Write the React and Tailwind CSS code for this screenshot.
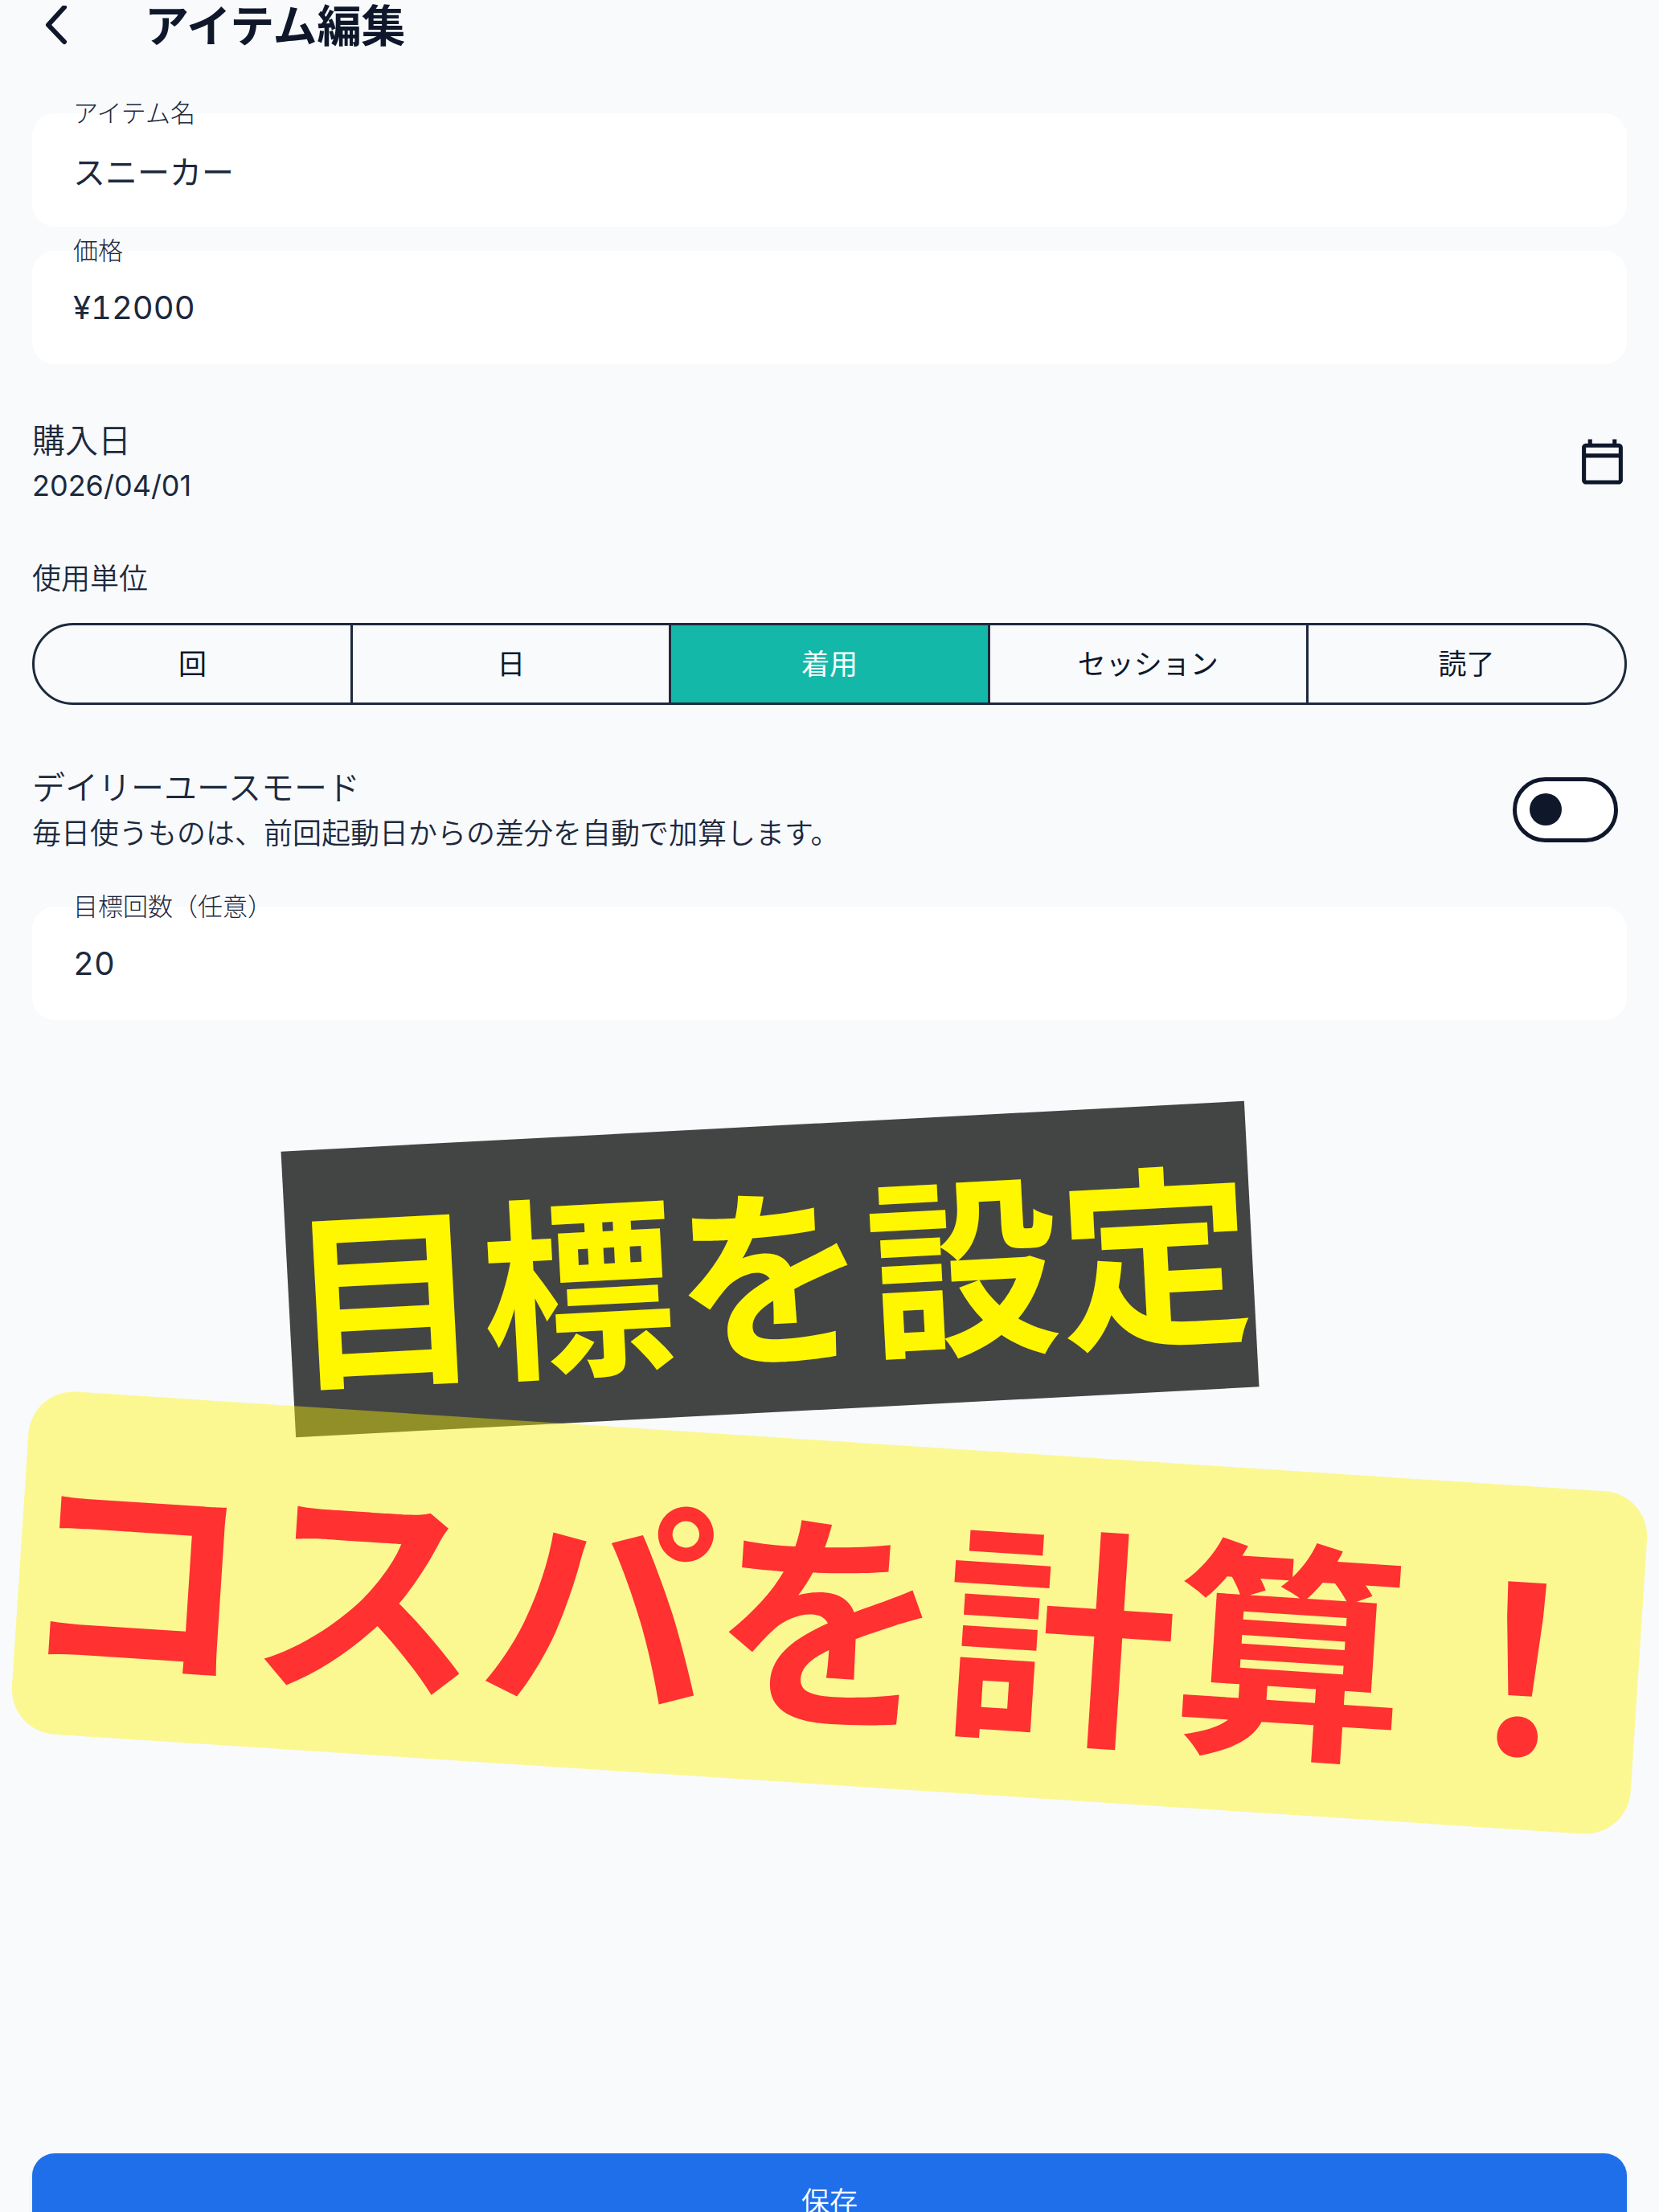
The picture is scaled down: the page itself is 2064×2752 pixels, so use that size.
import { useState } from "react";

const UNITS = ["回", "日", "着用", "セッション", "読了"];

function Field({ id, label, value, onChange, className = "" }) {
  return (
    <div className={`relative ${className}`}>
      <input
        id={id}
        className="h-[141px] w-full rounded-[28px] bg-white px-[51px] text-[40px] tabular-nums text-slate-800 focus:outline-none"
        value={value}
        onChange={(e) => onChange(e.target.value)}
      />
      <label
        htmlFor={id}
        className="absolute left-[51px] top-0 -translate-y-1/2 text-[31px] font-light leading-10 text-slate-800"
      >
        {label}
      </label>
    </div>
  );
}

function BackIcon() {
  return (
    <svg viewBox="0 0 30 50" className="h-[50px] w-[30px]" fill="none" stroke="currentColor" strokeWidth="6" strokeLinecap="round" strokeLinejoin="round">
      <path d="M26 2 6 24l20 21" />
    </svg>
  );
}

function CalendarIcon() {
  return (
    <svg viewBox="0 0 24 24" className="h-[61px] w-[61px]" fill="currentColor">
      <path d="M20 3h-1V1h-2v2H7V1H5v2H4c-1.1 0-2 .9-2 2v16c0 1.1.9 2 2 2h16c1.1 0 2-.9 2-2V5c0-1.1-.9-2-2-2zm0 2v3H4V5h16zM4 21V10h16v11H4z" />
    </svg>
  );
}

export default function App() {
  const [name, setName] = useState("スニーカー");
  const [price, setPrice] = useState("¥12000");
  const [target, setTarget] = useState("20");
  const [unit, setUnit] = useState("着用");
  const [daily, setDaily] = useState(false);

  return (
    <div
      lang="ja"
      className="flex h-screen flex-col overflow-hidden bg-slate-50 px-10 font-['Inter','Noto_Sans_CJK_JP',sans-serif] text-slate-900"
    >
      <header className="flex h-16 shrink-0 items-center gap-24 pl-[14px]">
        <button type="button" aria-label="戻る">
          <BackIcon />
        </button>
        <h1 className="text-[55px] font-bold leading-[60px]">アイテム編集</h1>
      </header>

      <main className="flex flex-col">
        <Field id="item-name" label="アイテム名" value={name} onChange={setName} className="mt-[77px]" />
        <Field id="item-price" label="価格" value={price} onChange={setPrice} className="mt-[30px]" />

        <div className="mt-[65px] flex items-center justify-between">
          <div>
            <p className="text-[41px] font-[350] leading-[60px] text-slate-800">購入日</p>
            <p className="text-[36px] leading-[52px] text-slate-800">2026/04/01</p>
          </div>
          <button type="button" aria-label="購入日を選択">
            <CalendarIcon />
          </button>
        </div>

        <fieldset className="mt-[63px]">
          <legend className="text-[36px] font-[350] leading-[54px] text-slate-800">使用単位</legend>
          <div className="mt-[28px] flex h-[102px] divide-x-[3px] divide-slate-800 overflow-hidden rounded-full border-[3px] border-slate-800">
            {UNITS.map((item) => (
              <label
                key={item}
                className="flex flex-1 cursor-pointer items-center justify-center text-[35px] has-checked:bg-[#14b8a8] has-checked:text-white"
              >
                <input
                  type="radio"
                  name="unit"
                  className="sr-only"
                  checked={unit === item}
                  onChange={() => setUnit(item)}
                />
                {item}
              </label>
            ))}
          </div>
        </fieldset>

        <div className="mt-[73px] flex items-center justify-between pr-[11px]">
          <label htmlFor="daily-mode" className="font-[350] text-slate-800">
            <span className="block text-[41px] leading-[60px]">デイリーユースモード</span>
            <span className="block text-[36px] leading-[54px]">
              毎日使うものは、前回起動日からの差分を自動で加算します。
            </span>
          </label>
          <input
            id="daily-mode"
            type="checkbox"
            role="switch"
            checked={daily}
            onChange={(e) => setDaily(e.target.checked)}
            className="flex h-[81px] w-[131px] shrink-0 cursor-pointer appearance-none items-center rounded-full border-[5px] border-slate-900 bg-white px-4 before:h-10 before:w-10 before:rounded-full before:bg-slate-900 before:content-[''] checked:justify-end"
          />
        </div>

        <Field id="item-target" label="目標回数（任意）" value={target} onChange={setTarget} className="mt-[64px]" />

        <section className="-mx-[17px] mt-[132px] flex flex-col items-center whitespace-nowrap font-['Noto_Sans_CJK_JP',sans-serif] font-bold">
          <p className="mr-[148px] -rotate-3 bg-[#434544] pb-1 text-[240px] leading-[352px] text-[#fff700]">
            目標を設定
          </p>
          <p className="mt-9 flex w-full rotate-[3.72deg] justify-center rounded-[56px] bg-[#fff500]/42 pb-2 text-[288px] leading-[419px] text-[#ff3131]">
            コスパを計算！
          </p>
        </section>
      </main>

      <button
        type="button"
        className="-mb-12 mt-auto h-[121px] shrink-0 rounded-[28px] bg-[#1f6feb] text-[35px] font-[350] text-white shadow-md"
      >
        保存
      </button>
    </div>
  );
}
